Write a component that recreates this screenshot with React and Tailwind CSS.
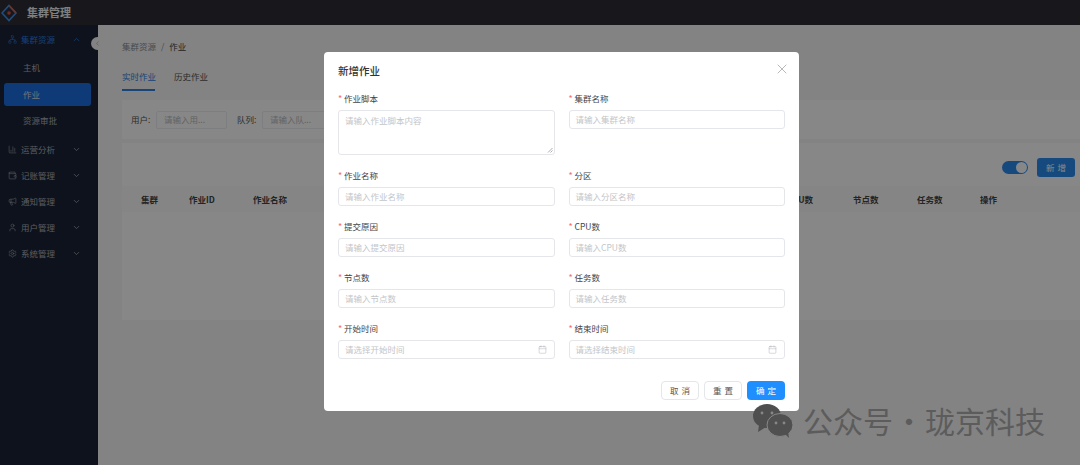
import React from "react";
import { ChevronUp, ChevronDown, ChevronLeft, X, Calendar, ChartColumn, Wallet, Megaphone, User, Settings, Network } from "lucide-react";

const FONT = '"Noto Sans CJK SC","Noto Sans",sans-serif';

function MenuItem({ icon: Icon, label }) {
  return (
    <div className="h-[26px] flex items-center pl-[8px] pr-[17px] text-[#a9aeb8] text-[8.5px]">
      <Icon size={9} strokeWidth={1.5} className="mr-[4px]" />
      <span className="flex-1">{label}</span>
      <ChevronDown size={9} strokeWidth={2} />
    </div>
  );
}

function Field({ label, placeholder, textarea, date }) {
  return (
    <div className="flex flex-col">
      <div className="h-[15px] flex items-center text-[8.5px] text-[#444] leading-none">
        <span className="text-[#f56c6c] w-[6px] text-[9px]">*</span>
        {label}
      </div>
      {textarea ? (
        <div className="mt-[4px] h-[45px] rounded-[3px] border border-[#e4e6ea] px-[6px] pt-[3px] text-[8.5px] leading-[13px] text-[#c3c5c9] relative">
          {placeholder}
          <svg className="absolute right-[1px] bottom-[1px]" width="6" height="6" viewBox="0 0 6 6">
            <path d="M1 5.5 5.5 1M3.5 5.5 5.5 3.5" stroke="#8b8b8b" strokeWidth="0.7" />
          </svg>
        </div>
      ) : (
        <div className="mt-[4px] h-[19px] rounded-[3px] border border-[#e4e6ea] px-[6px] flex items-center justify-between text-[8.5px] text-[#c3c5c9]">
          <span>{placeholder}</span>
          {date && <Calendar size={9} strokeWidth={1.2} className="text-[#a8abb2] mr-[1px]" />}
        </div>
      )}
    </div>
  );
}

function Btn({ children, primary }) {
  return (
    <div
      className={
        "w-[38px] h-[19px] rounded-[4px] flex items-center justify-center text-[8.5px] tracking-[3px] pl-[3px] " +
        (primary ? "bg-[#1f8fff] text-white" : "border border-[#e4e6ea] text-[#555] bg-white")
      }
    >
      {children}
    </div>
  );
}

export default function App() {
  return (
    <div className="relative w-[1080px] h-[465px] overflow-hidden bg-[#f8f8f8] flex flex-col" style={{ fontFamily: FONT }}>
      {/* top bar */}
      <div className="h-[25px] shrink-0 bg-[#2e2f36] flex items-center pl-[1px]">
        <svg width="16" height="18" viewBox="0 0 16 18">
          <path d="M8 1.5 15 9 8 16.5 1 9Z" fill="none" stroke="#3d92ee" strokeWidth="1.6" />
          <path d="M8 1.5 15 9" stroke="#d9603f" strokeWidth="1.6" />
          <circle cx="8" cy="9" r="1.8" fill="#d94f43" />
        </svg>
        <span className="ml-[10px] text-[11px] font-bold text-[#f0f0f0]">集群管理</span>
      </div>

      <div className="flex flex-1 min-h-0">
        {/* sidebar */}
        <div className="w-[98px] shrink-0 bg-[#1c2335] pt-[1px]">
          <div className="h-[26px] flex items-center pl-[8px] pr-[17px] text-[#2a7ae0] text-[8.5px]">
            <Network size={9} strokeWidth={1.5} className="mr-[4px]" />
            <span className="flex-1">集群资源</span>
            <ChevronUp size={9} strokeWidth={2} />
          </div>
          <div className="mt-[2px] h-[26px] flex items-center pl-[23px] text-[#a9aeb8] text-[8.5px]">主机</div>
          <div className="mt-[3px] ml-[4px] mr-[7px] h-[23px] rounded-[3px] bg-[#1c6ee0] flex items-center pl-[19px] text-[#d6dde8] text-[8.5px]">作业</div>
          <div className="mt-[1px] h-[26px] flex items-center pl-[23px] text-[#a9aeb8] text-[8.5px] mb-[3px]">资源审批</div>
          <MenuItem icon={ChartColumn} label="运营分析" />
          <MenuItem icon={Wallet} label="记账管理" />
          <MenuItem icon={Megaphone} label="通知管理" />
          <MenuItem icon={User} label="用户管理" />
          <MenuItem icon={Settings} label="系统管理" />
        </div>

        {/* main */}
        <div className="flex-1 min-w-0 pl-[24px] flex flex-col">
          <div className="pt-[15px] h-[40px] text-[8.5px] leading-[13px] text-[#8a8d91]">
            集群资源<span className="mx-[5px]">/</span><span className="text-[#444]">作业</span>
          </div>
          <div className="flex text-[8.5px] gap-[19px] text-[#555] h-[26px] whitespace-nowrap">
            <div className="w-[33px] h-[26px] border-b-2 border-[#2f80e0] text-[#2f80e0] pt-[5px] leading-[13px]">实时作业</div>
            <div className="pt-[5px] leading-[13px]">历史作业</div>
          </div>
          <div className="h-[39px] bg-white mt-[9px] flex items-center pl-[9px] text-[8.5px] text-[#555]">
            <span className="w-[25px]">用户:</span>
            <div className="w-[71px] h-[18px] border border-[#eceef1] rounded-[2px] px-[7px] flex items-center text-[#bbb]">请输入用...</div>
            <span className="ml-[10px] w-[25px]">队列:</span>
            <div className="w-[71px] h-[18px] border border-[#eceef1] rounded-[2px] px-[7px] flex items-center text-[#bbb]">请输入队...</div>
          </div>
          <div className="mt-[4px] bg-white h-[177px] flex flex-col">
            <div className="h-[43px] flex items-center justify-end gap-[9px] pr-[5px] pt-[5px] pb-0">
              <div className="w-[26px] h-[13px] rounded-full bg-[#2a8cf0] flex items-center justify-end pr-[1px]">
                <div className="w-[11px] h-[11px] rounded-full bg-white" />
              </div>
              <div className="w-[38px] h-[19px] rounded-[3px] bg-[#2a8cf0] flex items-center justify-center text-white text-[8.5px] tracking-[3px] pl-[3px]">新增</div>
            </div>
            <div className="h-[26px] bg-[#fcfcfc] grid grid-cols-[48px_64px_534px_66px_64px_63px_1fr] pl-[19px] items-center text-[8.5px] font-bold text-[#444]">
              <span>集群</span>
              <span>作业ID</span>
              <span>作业名称</span>
              <span>CPU数</span>
              <span>节点数</span>
              <span>任务数</span>
              <span>操作</span>
            </div>
          </div>
        </div>
      </div>

      {/* collapse handle sits on the sidebar edge */}
      <div className="absolute left-[91px] top-[37px] w-[13px] h-[13px] rounded-full bg-[#f8f8f8] flex items-center justify-center text-[#999]">
        <ChevronLeft size={7} />
      </div>

      {/* mask + dialog */}
      <div className="absolute inset-0 bg-black/[0.47] pl-[324px] pt-[52px]">
        <div className="w-[475px] h-[359px] bg-white rounded-[4px] px-[14px] pt-[11px] relative">
          <div className="h-[16px] text-[10.5px] font-medium leading-[16px] text-[#333]">新增作业</div>
          <X size={16} strokeWidth={0.9} className="absolute right-[9px] top-[9px] text-[#888]" />
          <div className="mt-[12px] w-[447px] grid grid-cols-2 gap-x-[14px] gap-y-[13px]">
            <Field label="作业脚本" placeholder="请输入作业脚本内容" textarea />
            <Field label="集群名称" placeholder="请输入集群名称" />
            <Field label="作业名称" placeholder="请输入作业名称" />
            <Field label="分区" placeholder="请输入分区名称" />
            <Field label="提交原因" placeholder="请输入提交原因" />
            <Field label="CPU数" placeholder="请输入CPU数" />
            <Field label="节点数" placeholder="请输入节点数" />
            <Field label="任务数" placeholder="请输入任务数" />
            <Field label="开始时间" placeholder="请选择开始时间" date />
            <Field label="结束时间" placeholder="请选择结束时间" date />
          </div>
          <div className="mt-[22px] w-[447px] flex justify-end gap-[5px]">
            <Btn>取消</Btn>
            <Btn>重置</Btn>
            <Btn primary>确定</Btn>
          </div>
        </div>
      </div>

      {/* watermark */}
      <div className="absolute left-[752px] top-[402px] flex items-center h-[38px]">
        <svg width="42" height="36" viewBox="0 0 42 36">
          <ellipse cx="15" cy="13" rx="14" ry="12" fill="#4f4f4f" />
          <path d="M7 22 6 29 14 24Z" fill="#4f4f4f" />
          <ellipse cx="28" cy="22" rx="13" ry="11.5" fill="#505050" stroke="#878787" strokeWidth="1" />
          <path d="M33 31 37 35 36 28Z" fill="#505050" />
          <circle cx="10" cy="10" r="1.4" fill="#878787" />
          <circle cx="20" cy="10" r="1.4" fill="#878787" />
          <circle cx="24" cy="20" r="1.4" fill="#878787" />
          <circle cx="32" cy="20" r="1.4" fill="#878787" />
        </svg>
        <span className="ml-[9px] text-[30px] leading-none text-[#5c5c5c] -mt-[2px] flex items-center whitespace-nowrap">
          公众号<span className="w-[32px] text-center">·</span>珑京科技
        </span>
      </div>
    </div>
  );
}
